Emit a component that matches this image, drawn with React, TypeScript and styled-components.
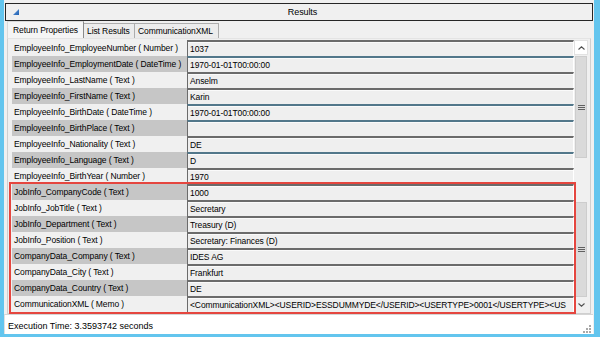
import React from "react";
import styled, { createGlobalStyle } from "styled-components";

const GlobalStyle = createGlobalStyle`
  html, body { margin: 0; padding: 0; background: #f0f0f0; }
  * { box-sizing: border-box; }
`;

const CYAN = "#63c5ee";

const Window = styled.div`
  width: 600px;
  height: 337px;
  background: #f0f0f0;
  border-left: 4px solid ${CYAN};
  border-right: 6px solid ${CYAN};
  border-bottom: 3px solid ${CYAN};
  display: flex;
  flex-direction: column;
  font-family: "Liberation Sans", Arial, sans-serif;
  color: #000;
  overflow: hidden;
`;

const TitleBar = styled.div`
  margin: 3px 1px 0 1px;
  height: 18px;
  border: 1px solid #262626;
  background: #f0f0f0;
  display: grid;
  grid-template-columns: 1fr auto 1fr;
  align-items: center;
  padding-left: 7px;
  font-size: 9px;
`;

const TitleText = styled.span`
  letter-spacing: -0.1px;
`;

const TabStrip = styled.div`
  height: 17px;
  display: flex;
  align-items: flex-end;
  padding-left: 3px;
`;

const Tab = styled.div<{ $active?: boolean; $w: number }>`
  width: ${(p) => p.$w}px;
  height: ${(p) => (p.$active ? 17 : 15)}px;
  padding: 0 0 0 ${(p) => (p.$active ? 5 : 3)}px;
  margin-right: -1px;
  display: flex;
  align-items: center;
  font-size: 8.5px;
  letter-spacing: -0.1px;
  white-space: nowrap;
  border: 1px solid ${(p) => (p.$active ? "#d9d9d9" : "#adadad")};
  border-right-color: ${(p) => (p.$active ? "#8a8a8a" : "#adadad")};
  border-bottom: none;
  background: ${(p) => (p.$active ? "#f5f5f5" : "#ececec")};
  position: relative;
  z-index: ${(p) => (p.$active ? 1 : 0)};
`;

const Panel = styled.div`
  flex: 1;
  margin: 0 3px;
  border: 1px solid #cfcfcf;
  border-top-color: #e4e4e4;
  padding: 1px 2px 1px 3px;
  display: flex;
`;

const Grid = styled.div`
  flex: 1;
  height: 272px;
  display: flex;
`;

const Rows = styled.div`
  flex: 1;
  display: flex;
  flex-direction: column;
`;

const Group = styled.div`
  display: flex;
  flex-direction: column;
  outline: 2px solid #e5463f;
  position: relative;
  z-index: 2;
`;

const Row = styled.div`
  display: grid;
  grid-template-columns: 176px 1fr;
  height: 16px;
`;

const Label = styled.div<{ $shaded: boolean }>`
  margin-left: 1px;
  padding-left: 2px;
  background: ${(p) => (p.$shaded ? "#c6c6c6" : "#f0f0f0")};
  font-size: 8.5px;
  letter-spacing: -0.1px;
  line-height: 16px;
  white-space: nowrap;
  overflow: hidden;
`;

const Value = styled.div<{ $tone: "gray" | "blue" }>`
  border-top: 2px solid ${(p) => (p.$tone === "blue" ? "#52778a" : "#6b6b6b")};
  border-left: 1px solid #6b6b6b;
  border-right: 1px solid #ffffff;
  box-shadow: inset 0 1px 0 #fafafa;
  background: #efefef;
  padding: 0 2px;
  font-size: 8.5px;
  letter-spacing: -0.1px;
  line-height: 14px;
  white-space: nowrap;
  overflow: hidden;
`;

const ScrollBar = styled.div`
  width: 14px;
  display: flex;
  flex-direction: column;
  background: #f0f0f0;
`;

const ArrowBox = styled.div<{ $light?: boolean }>`
  height: 15px;
  display: flex;
  align-items: center;
  justify-content: center;
  background: ${(p) => (p.$light ? "#f0f0f0" : "#ffffff")};
  border: 1px solid ${(p) => (p.$light ? "#f0f0f0" : "#e2e2e2")};
`;

const Thumb = styled.div<{ $h: number; $mt?: number }>`
  height: ${(p) => p.$h}px;
  margin: ${(p) => p.$mt ?? 0}px 1px 0 1px;
  background: #dadada;
  border: 1px solid #cdcdcd;
  display: flex;
  align-items: center;
  justify-content: center;
`;

const Track = styled.div`
  flex: 1;
`;

const StatusBar = styled.div`
  height: 20px;
  margin-right: 1px;
  border-top: 1px solid #d5d5d5;
  border-left: 1px solid #e0e0e0;
  background: #ffffff;
  display: flex;
  align-items: center;
  justify-content: space-between;
  padding: 2px 1px 0 3px;
  font-size: 9px;
`;

const GripWrap = styled.div`
  align-self: flex-end;
  height: 9px;
  display: flex;
`;

type Tone = "gray" | "blue";
const rows: { label: string; value: string; tone: Tone }[] = [
  { label: "EmployeeInfo_EmployeeNumber ( Number )", value: "1037", tone: "gray" },
  { label: "EmployeeInfo_EmploymentDate ( DateTime )", value: "1970-01-01T00:00:00", tone: "blue" },
  { label: "EmployeeInfo_LastName ( Text )", value: "Anselm", tone: "gray" },
  { label: "EmployeeInfo_FirstName ( Text )", value: "Karin", tone: "gray" },
  { label: "EmployeeInfo_BirthDate ( DateTime )", value: "1970-01-01T00:00:00", tone: "blue" },
  { label: "EmployeeInfo_BirthPlace ( Text )", value: "", tone: "blue" },
  { label: "EmployeeInfo_Nationality ( Text )", value: "DE", tone: "gray" },
  { label: "EmployeeInfo_Language ( Text )", value: "D", tone: "blue" },
  { label: "EmployeeInfo_BirthYear ( Number )", value: "1970", tone: "gray" },
];

const marked: { label: string; value: string; tone: Tone }[] = [
  { label: "JobInfo_CompanyCode ( Text )", value: "1000", tone: "gray" },
  { label: "JobInfo_JobTitle ( Text )", value: "Secretary", tone: "gray" },
  { label: "JobInfo_Department ( Text )", value: "Treasury (D)", tone: "gray" },
  { label: "JobInfo_Position ( Text )", value: "Secretary: Finances (D)", tone: "gray" },
  { label: "CompanyData_Company ( Text )", value: "IDES AG", tone: "gray" },
  { label: "CompanyData_City ( Text )", value: "Frankfurt", tone: "gray" },
  { label: "CompanyData_Country ( Text )", value: "DE", tone: "gray" },
  {
    label: "CommunicationXML ( Memo )",
    value: "<CommunicationXML><USERID>ESSDUMMYDE</USERID><USERTYPE>0001</USERTYPE><US",
    tone: "gray",
  },
];

const Grip = () => (
  <svg width="7" height="5" viewBox="0 0 7 5" shapeRendering="crispEdges">
    <rect x="0" y="0" width="7" height="1" fill="#606060" />
    <rect x="0" y="2" width="7" height="1" fill="#606060" />
    <rect x="0" y="4" width="7" height="1" fill="#606060" />
  </svg>
);

export default function App() {
  return (
    <>
      <GlobalStyle />
      <Window>
        <TitleBar>
          <svg width="6" height="6" viewBox="0 0 6 6">
            <defs>
              <linearGradient id="tri" x1="0" y1="0" x2="1" y2="1">
                <stop offset="0" stopColor="#6aa0e0" />
                <stop offset="1" stopColor="#1f5fb0" />
              </linearGradient>
            </defs>
            <polygon points="6,0 6,6 0,6" fill="url(#tri)" />
          </svg>
          <TitleText>Results</TitleText>
          <span />
        </TitleBar>
        <TabStrip>
          <Tab $active $w={77}>Return Properties</Tab>
          <Tab $w={52}>List Results</Tab>
          <Tab $w={85}>CommunicationXML</Tab>
        </TabStrip>
        <Panel>
          <Grid>
            <Rows>
              {rows.map((r, i) => (
                <Row key={r.label}>
                  <Label $shaded={i % 2 === 1}>{r.label}</Label>
                  <Value $tone={r.tone}>{r.value}</Value>
                </Row>
              ))}
              <Group>
                {marked.map((r, i) => (
                  <Row key={r.label}>
                    <Label $shaded={(i + rows.length) % 2 === 1}>{r.label}</Label>
                    <Value $tone={r.tone}>{r.value}</Value>
                  </Row>
                ))}
              </Group>
            </Rows>
            <ScrollBar>
              <ArrowBox>
                <svg width="7" height="4" viewBox="0 0 7 4">
                  <polyline points="0.5,3.5 3.5,0.8 6.5,3.5" fill="none" stroke="#505050" strokeWidth="1.1" />
                </svg>
              </ArrowBox>
              <Thumb $h={102} $mt={1}>
                <Grip />
              </Thumb>
              <Track />
              <Thumb $h={95}>
                <Grip />
              </Thumb>
              <ArrowBox $light>
                <svg width="7" height="4" viewBox="0 0 7 4">
                  <polyline points="0.5,0.5 3.5,3.2 6.5,0.5" fill="none" stroke="#505050" strokeWidth="1.1" />
                </svg>
              </ArrowBox>
            </ScrollBar>
          </Grid>
        </Panel>
        <StatusBar>
          <span>Execution Time: 3.3593742 seconds</span>
          <GripWrap>
            <svg width="9" height="9" viewBox="0 0 9 9">
              {[
                [6, 0],
                [3, 3],
                [6, 3],
                [0, 6],
                [3, 6],
                [6, 6],
              ].map(([x, y]) => (
                <rect key={`${x}-${y}`} x={x} y={y} width="2" height="2" fill="#a8a8a8" />
              ))}
            </svg>
          </GripWrap>
        </StatusBar>
      </Window>
    </>
  );
}
